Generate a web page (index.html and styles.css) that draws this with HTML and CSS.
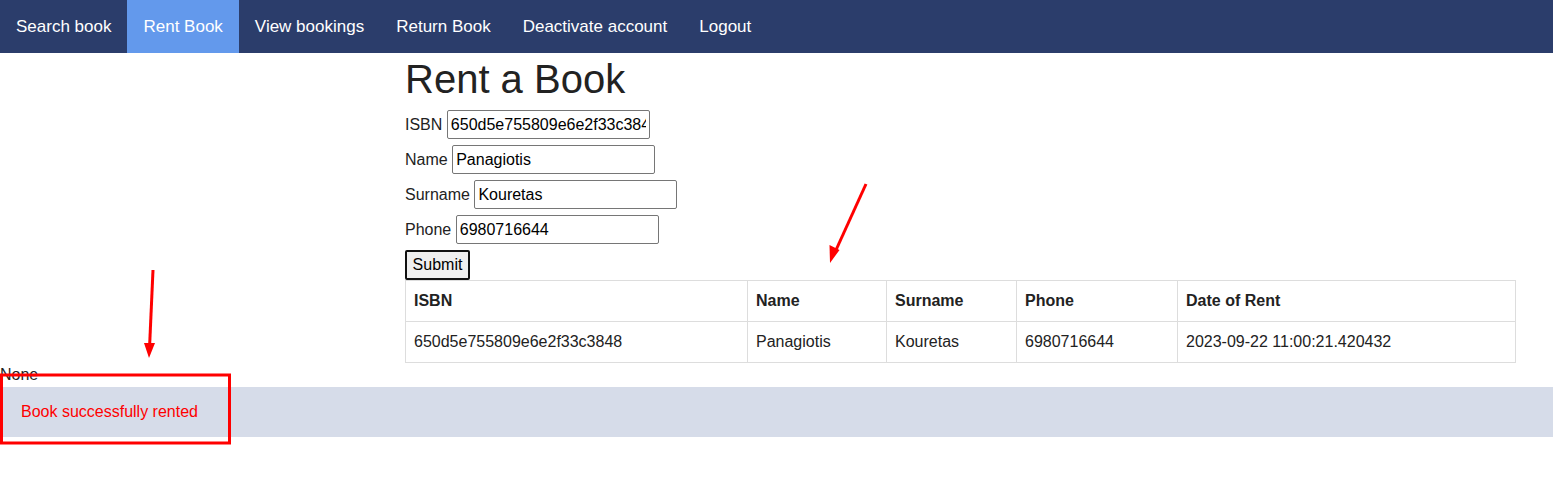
FILE: index.html
```html
<!DOCTYPE html>
<html>
<head>
<meta charset="utf-8">
<title>Rent a Book</title>
<link rel="stylesheet" href="styles.css">
</head>
<body>
<nav class="topnav">
  <a href="#">Search book</a>
  <a href="#" class="active">Rent Book</a>
  <a href="#">View bookings</a>
  <a href="#">Return Book</a>
  <a href="#">Deactivate account</a>
  <a href="#">Logout</a>
</nav>
<main class="content">
  <h1>Rent a Book</h1>
  <form class="rent-form">
    <div class="row"><label>ISBN</label><input type="text" value="650d5e755809e6e2f33c3848"></div>
    <div class="row"><label>Name</label><input type="text" value="Panagiotis"></div>
    <div class="row"><label>Surname</label><input type="text" value="Kouretas"></div>
    <div class="row"><label>Phone</label><input type="text" value="6980716644"></div>
    <button type="button" class="submit">Submit</button>
  </form>
  <table class="bookings">
    <colgroup>
      <col class="c1"><col class="c2"><col class="c3"><col class="c4"><col class="c5">
    </colgroup>
    <thead>
      <tr><th>ISBN</th><th>Name</th><th>Surname</th><th>Phone</th><th>Date of Rent</th></tr>
    </thead>
    <tbody>
      <tr><td>650d5e755809e6e2f33c3848</td><td>Panagiotis</td><td>Kouretas</td><td>6980716644</td><td>2023-09-22 11:00:21.420432</td></tr>
    </tbody>
  </table>
</main>
<p class="none">None</p>
<div class="flash">Book successfully rented</div>

<svg class="annot" width="1553" height="480" viewBox="0 0 1553 480">
  <line x1="153" y1="270" x2="149.7" y2="344" stroke="#ff0000" stroke-width="3"/>
  <polygon points="144,343 155,343 149,358" fill="#ff0000"/>
  <line x1="866" y1="184" x2="836" y2="250" stroke="#ff0000" stroke-width="3"/>
  <polygon points="829.5,245 839.5,250 830,263" fill="#ff0000"/>
  <rect x="1.5" y="375" width="228" height="68" fill="none" stroke="#ff0000" stroke-width="3"/>
</svg>
</body>
</html>
```
FILE: styles.css
```css
html, body {
  margin: 0;
  padding: 0;
  background: #ffffff;
  font-family: "Liberation Sans", Arial, sans-serif;
  font-size: 16px;
  color: #222222;
}

.topnav {
  display: flex;
  height: 53px;
  background: #2b3d6b;
}

.topnav a {
  display: flex;
  align-items: center;
  padding: 0 16px;
  color: #ffffff;
  text-decoration: none;
  font-size: 17px;
}

.topnav a.active {
  background: #6399ec;
}

.content {
  margin-left: 405px;
  margin-right: 38px;
}

.content h1 {
  margin: 3px 0 8px 0;
  font-size: 40px;
  font-weight: normal;
  line-height: 46px;
  color: #222222;
}

.rent-form {
  margin: 0;
}

.rent-form .row {
  display: flex;
  align-items: center;
  height: 29px;
  margin-bottom: 6px;
}

.rent-form label {
  margin-right: 4.5px;
  color: #222222;
}

.rent-form input {
  box-sizing: border-box;
  width: 203px;
  height: 29px;
  padding: 1px 3px;
  border: 1px solid #767676;
  border-radius: 2px;
  font-family: "Liberation Sans", Arial, sans-serif;
  font-size: 16px;
  color: #000000;
  background: #ffffff;
}

.submit {
  display: block;
  box-sizing: border-box;
  width: 65px;
  height: 30px;
  padding: 0;
  border: 2px solid #111111;
  border-radius: 2px;
  background: #efefef;
  font-family: "Liberation Sans", Arial, sans-serif;
  font-size: 16px;
  color: #000000;
}

.bookings {
  width: 1110px;
  border-collapse: collapse;
  table-layout: fixed;
  margin: 0;
}

.bookings col.c1 { width: 342px; }
.bookings col.c2 { width: 139px; }
.bookings col.c3 { width: 130px; }
.bookings col.c4 { width: 161px; }
.bookings col.c5 { width: 338px; }

.bookings th,
.bookings td {
  border: 1px solid #dddddd;
  padding: 11px 8px;
  line-height: 18px;
  text-align: left;
  color: #222222;
}

.bookings th {
  font-weight: bold;
}

.none {
  margin: 3px 0 0 0;
  line-height: 18px;
  color: #222222;
}

.flash {
  margin-top: 3px;
  height: 50px;
  box-sizing: border-box;
  padding: 16px 21px;
  line-height: 18px;
  background: #d6dce9;
  color: #ff0000;
}

.annot {
  position: absolute;
  left: 0;
  top: 0;
  pointer-events: none;
}
```
